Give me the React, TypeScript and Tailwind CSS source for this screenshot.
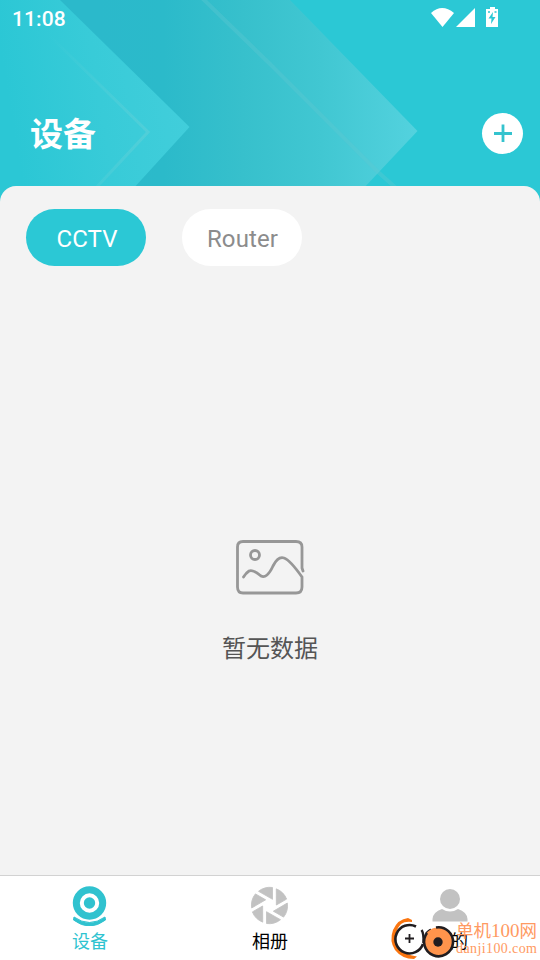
import React from "react";

const cjk = "font-['Roboto','Noto_Sans_CJK_SC',sans-serif]";

function HeaderArt() {
  return (
    <svg className="absolute inset-0" width="540" height="206" viewBox="0 0 540 206">
      <defs>
        <linearGradient id="wide" gradientUnits="userSpaceOnUse" x1="100" y1="0" x2="417" y2="0">
          <stop offset="0" stopColor="#2bb9cb" />
          <stop offset="0.2" stopColor="#2bbaca" />
          <stop offset="0.45" stopColor="#37c0cc" />
          <stop offset="0.7" stopColor="#41c7d2" />
          <stop offset="1" stopColor="#53d2de" />
        </linearGradient>
        <linearGradient id="near" gradientUnits="userSpaceOnUse" x1="10" y1="110" x2="189" y2="80">
          <stop offset="0" stopColor="#2bc7d5" />
          <stop offset="0.5" stopColor="#38cbd8" />
          <stop offset="1" stopColor="#42cedb" />
        </linearGradient>
        <linearGradient id="line" gradientUnits="userSpaceOnUse" x1="50" y1="0" x2="150" y2="0">
          <stop offset="0" stopColor="#5bd0d8" stopOpacity="0" />
          <stop offset="1" stopColor="#5bd0d8" stopOpacity="0.65" />
        </linearGradient>
      </defs>
      <path d="M0 0H290L417.500 131L362 190H0Z" fill="url(#wide)" />
      <path d="M0 0H60L189.500 127L132 190H0Z" fill="url(#near)" />
      <path d="M50 36L148 132L94 190" fill="none" stroke="url(#line)" strokeWidth="3" />
      <path d="M200 -4L270 64L378 172L396 188" fill="none" stroke="#62c9d0" strokeOpacity="0.35" strokeWidth="4" />
    </svg>
  );
}

function StatusIcons() {
  return (
    <svg width="70" height="24" viewBox="430 5 70 24" fill="#fff">
      <path d="M431 13Q442 3 454 13L442.500 27Z" />
      <path d="M456 27L475 8V27Z" />
      <path fillRule="evenodd" d="M486 9H490V7H495V9H498V27H486ZM493 12L488.500 18.500H491.500L491 24L495.500 17H492.500Z" />
      <path d="M488 12h2M494.500 12h2" stroke="#2bc8d5" strokeWidth="1.500" />
    </svg>
  );
}

function Camera() {
  return (
    <svg width="40" height="40" viewBox="0 0 40 40">
      <circle cx="19.500" cy="17" r="13.200" fill="none" stroke="#30c2cf" strokeWidth="7" />
      <circle cx="19.500" cy="17" r="5.700" fill="#30c2cf" />
      <path d="M4 31Q19.500 42 35 31L35.500 34Q19.500 46 3.500 34Z" fill="#30c2cf" stroke="#30c2cf" strokeLinejoin="round" />
    </svg>
  );
}

function Aperture() {
  return (
    <svg width="40" height="40" viewBox="-19.500 -19.500 40 40" fill="#c2c2c2">
      {[0, 60, 120, 180, 240, 300].map((a) => (
        <path key={a} transform={`rotate(${a})`} d="M3 -18A18.200 18.200 0 0 0 -11 -14.200L3 -6.200Z" stroke="#c2c2c2" strokeWidth="0.800" strokeLinejoin="round" />
      ))}
    </svg>
  );
}

function Person() {
  return (
    <svg width="40" height="40" viewBox="0 0 40 40" fill="#c2c2c2">
      <circle cx="20" cy="13" r="10" />
      <path d="M2.500 35.500V33Q3 26 12 23Q20 28 28 23Q37 26 37.500 33V35.500Z" />
    </svg>
  );
}

function Tab({ icon, label, color }: { icon: React.ReactNode; label: string; color: string }) {
  return (
    <div className={`flex flex-1 flex-col items-center pt-[10px] ${color}`}>
      {icon}
      <span className="mt-[3px] text-[18px] leading-[26px]">{label}</span>
    </div>
  );
}

function Watermark() {
  return (
    <div className="absolute bottom-0 right-0 h-[50px] w-[152px] text-[#ff9a62]">
      <svg className="absolute inset-0" width="152" height="50" viewBox="388 910 152 50">
        <path d="M412 920L408 918Q398 919 393 930Q389 941 395 950Q402 959 414 959L417 956.500Q404 955 398 947Q392 934 401 924Q405 921 412 922Z" fill="#fa7510" />
        <path d="M416 926.500A14.200 14.200 0 1 0 423 944" fill="#fff" stroke="#211d20" strokeWidth="2.600" />
        <path d="M405 938.500H414M409.500 934V943" stroke="#211d20" strokeWidth="1.800" />
        <path d="M421.500 930Q424 933 423.500 943M426 934Q429 930 431 930" fill="none" stroke="#211d20" strokeWidth="2.500" />
        <circle cx="438" cy="942" r="14.500" fill="#ff944c" />
        <path d="M436 927.500A14.500 14.500 0 1 1 427 933" fill="none" stroke="#211d20" strokeWidth="2.600" />
        <circle cx="438" cy="942" r="4.700" fill="#211d20" />
      </svg>
      <div className="absolute left-[68px] top-[9px] whitespace-nowrap font-['Liberation_Serif','Noto_Sans_CJK_SC',serif] text-[17.500px] leading-[24px]">单机<span className="text-[19px]">100</span>网</div>
      <div className="absolute left-[68px] top-[31px] whitespace-nowrap font-['Liberation_Serif',serif] text-[14px] leading-[16px] tracking-[0.4px]">danji100.com</div>
    </div>
  );
}

export default function App() {
  return (
    <div className={`relative flex h-[960px] w-[540px] flex-col overflow-hidden bg-[#2bc8d5] ${cjk}`}>
      <HeaderArt />
      <header className="relative flex h-[186px] flex-col text-white">
        <div className="flex h-[34px] items-start justify-between pl-[12px] pr-[40px] pt-[5px]">
          <span className="text-[21px] font-medium leading-[28px] tracking-[0.1px]">11:08</span>
          <StatusIcons />
        </div>
        <div className="mt-[74px] flex items-center justify-between pl-[30px] pr-[17px]">
          <h1 className="pt-[3px] text-[33px] font-bold leading-[47px]">设备</h1>
          <button className="flex size-[41px] items-center justify-center rounded-full bg-white">
            <svg width="18" height="18" viewBox="0 0 18 18" stroke="#34c3ce" strokeWidth="2.800"><path d="M0 9.500H18M9 0.500V18" /></svg>
          </button>
        </div>
      </header>
      <main className="relative flex flex-1 flex-col rounded-t-[16px] bg-[#f3f3f3]">
        <div className="flex gap-[36px] pl-[26px] pt-[23px] text-[24px]">
          <button className="h-[57px] w-[120px] rounded-full bg-[#2bc8d5] pl-[2px] pr-0 pt-[3px] tracking-[0.1px] text-white">CCTV</button>
          <button className="h-[57px] w-[120px] rounded-full bg-white pl-[1px] pr-0 pt-[3px] tracking-[0.1px] text-[#8c8c8c]">Router</button>
        </div>
        <div className="mt-[272px] flex flex-col items-center">
          <svg width="72" height="58" viewBox="234 538 72 58" fill="none" stroke="#979797" strokeWidth="2.800" strokeLinecap="round">
            <path d="M303 571L302 568V547Q302 541.500 296 541.500H243Q237.500 541.500 237.500 547V587Q237.500 593 243 593H296Q302 593 302 587V577Q290 560 284 558Q278 556 273 566Q267 579 261 576Q253 569 249 571Q246 573 243.500 577" />
            <circle cx="255" cy="555" r="4.500" />
          </svg>
          <p className="mt-[34px] text-[24px] leading-[38px] text-[#555]">暂无数据</p>
        </div>
      </main>
      <nav className="relative flex h-[85px] border-t border-[#d2d2d2] bg-white">
        <Tab icon={<Camera />} label="设备" color="text-[#2fc3d0]" />
        <Tab icon={<Aperture />} label="相册" color="text-black" />
        <Tab icon={<Person />} label="我的" color="text-black" />
      </nav>
      <Watermark />
    </div>
  );
}
